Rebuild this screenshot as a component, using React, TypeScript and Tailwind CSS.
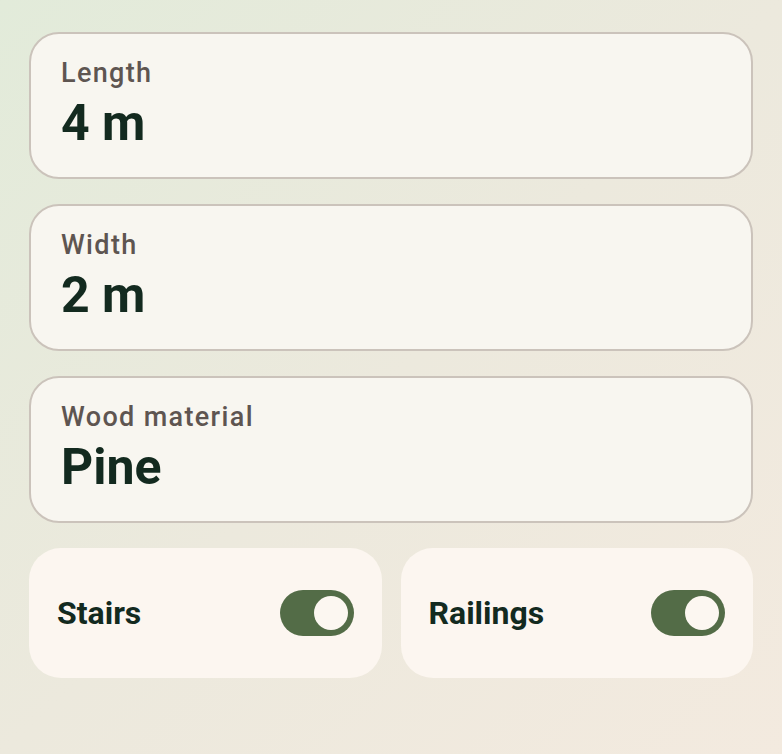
import React from "react";

function Field({ label, value }: { label: string; value: string }) {
  return (
    <div className="h-[147px] rounded-[30px] border-2 border-[#cbc3bb] bg-[#f8f6f0] px-[30px] pt-[21px]">
      <div className="text-[27px] leading-[36px] font-medium tracking-[0.05em] text-[#5e5551]">{label}</div>
      <div className="mt-[3px] text-[50px] leading-[58px] font-bold text-[#132a1f]">{value}</div>
    </div>
  );
}

function ToggleCard({ label }: { label: string }) {
  return (
    <div className="flex h-[130px] flex-1 items-center justify-between rounded-[32px] bg-[#fcf6f0] pl-[28px] pr-[28px]">
      <span className="text-[32px] font-bold text-[#132a1f]">{label}</span>
      <div className="flex h-[46px] w-[74px] items-center justify-end rounded-full bg-[#536c47] pr-[6px]">
        <div className="h-[34px] w-[34px] rounded-full bg-[#fcf7f1]" />
      </div>
    </div>
  );
}

export default function App() {
  return (
    <div
      className="h-[754px] w-[782px] bg-gradient-to-br from-[#e2ebda] via-[#ece9dd] to-[#f3eadf] px-[29px] pt-[32px]"
      style={{ fontFamily: "Roboto, 'Noto Sans', sans-serif" }}
    >
      <div className="flex flex-col gap-[25px]">
        <Field label="Length" value="4 m" />
        <Field label="Width" value="2 m" />
        <Field label="Wood material" value="Pine" />
        <div className="flex gap-[19px]">
          <ToggleCard label="Stairs" />
          <ToggleCard label="Railings" />
        </div>
      </div>
    </div>
  );
}
